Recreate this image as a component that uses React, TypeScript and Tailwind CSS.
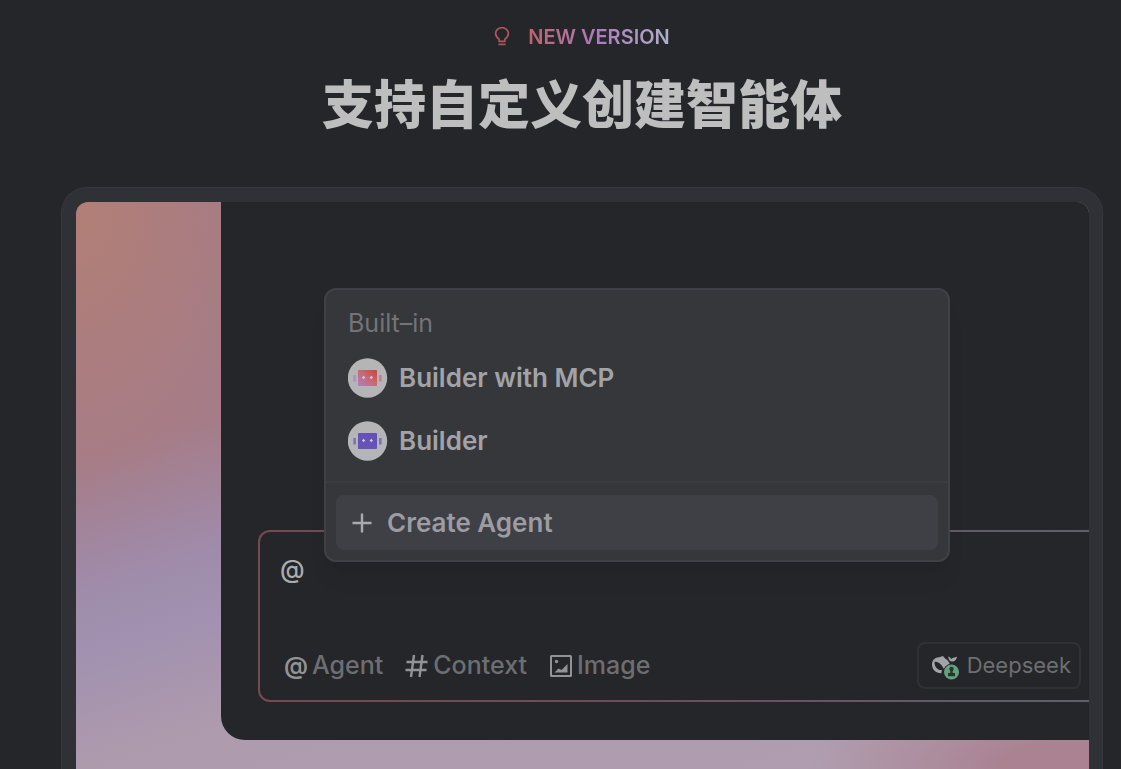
import { useState } from "react";

interface BotIconProps {
  id: string;
  from: string;
  to: string;
  ear: string;
}

const BotIcon = ({ id, from, to, ear }: BotIconProps) => {
  return (
    <svg className="size-10 shrink-0" viewBox="0 0 40 40" aria-hidden="true">
      <defs>
        <linearGradient id={id} x1="0" y1="1" x2="1" y2="0">
          <stop offset="0" stopColor={from} />
          <stop offset="0.5" stopColor={ear} />
          <stop offset="1" stopColor={to} />
        </linearGradient>
      </defs>
      <circle cx="19.500" cy="20" r="19.700" fill="#b5b4b6" />
      <rect x="10" y="12" width="19" height="16" rx="1" fill={`url(#${id})`} />
      <rect x="5.300" y="17" width="2.600" height="6.500" fill={from} opacity="0.7" />
      <rect x="31" y="17" width="2.600" height="6.500" fill={ear} opacity="0.7" />
      <path d="M15.600 17.800l1.700 1.700-1.700 1.700-1.700-1.700zM23.300 17.800l1.700 1.700-1.700 1.700-1.700-1.700z" fill="#d3c5d8" />
    </svg>
  );
};

const BulbIcon = () => {
  return (
    <svg className="h-5 w-4" viewBox="0 0 16 20" fill="none" stroke="#b0565a" strokeWidth="1.700" aria-hidden="true">
      <path d="M5.200 14.300v-2C2.800 10.400 1.600 8.700 1.600 6.500a6.400 5.800 0 0 1 12.800 0c0 2.200-1.200 3.900-3.600 5.800v2z" />
      <path d="M4.500 17.400h7" />
    </svg>
  );
};

const HashIcon = () => {
  return (
    <svg className="size-6" viewBox="0 0 24 24" fill="none" stroke="#929396" strokeWidth="2.400" aria-hidden="true">
      <path d="M1.500 8h21M.5 16h21M9 1L6 23M17.500 1l-3 22" />
    </svg>
  );
};

const ImageIcon = () => {
  return (
    <svg className="size-6" viewBox="0 0 24 24" fill="none" aria-hidden="true">
      <rect x="2" y="2" width="20" height="20" rx="0.500" stroke="#929396" strokeWidth="2" />
      <circle cx="7.500" cy="7.500" r="1.700" fill="#929396" />
      <path d="M5.500 18.500l4-4 3 1.500 6-6v8.500z" fill="#929396" />
    </svg>
  );
};

const DeepseekIcon = () => {
  return (
    <svg className="size-7" viewBox="0 0 28 28" aria-hidden="true">
      <path
        d="M1 12.500C1 8 4.300 5 8.500 5.200c1.500-.9 3-1.300 4-.9 0 1 1 1.700 2.300 2.600 2 1.400 3.400 2.900 3.900 5.100l-5.700 5-2.300-3.500C9.300 11.500 6.800 9.800 3.800 9.600c-.8 2.400.4 5.400 2.500 7.200 1.300 1.100 2.800 1.400 4.500 1.200l-.4 3.200C4.800 21.300 1 17.500 1 12.500z"
        fill="#a3a4a7"
      />
      <path
        d="M17.300 4.500c1.400.5 2.200 1.400 3 2.600 1-1.400 3-1.600 5.700-2.400-.2 2.600-2 4.700-4.600 4.900-2.600 0-4.100-2.300-4.100-5.100z"
        fill="#a3a4a7"
      />
      <circle cx="20.500" cy="20" r="8.300" fill="#25262a" />
      <circle cx="20.500" cy="20" r="7.500" fill="#64a27d" />
      <circle cx="20.500" cy="17" r="2.200" fill="#25382f" />
      <path d="M19.500 18h2l.4 3h2.100v3.300h-7V21h2.100z" fill="#25382f" />
    </svg>
  );
};

const App = () => {
  const [prompt, setPrompt] = useState("@");

  return (
    <main className="flex h-screen flex-col overflow-hidden bg-[#25262a] pt-[25px] pr-[18px] pl-[61px] font-['Inter','Noto_Sans_CJK_SC',sans-serif]">
      <div className="flex h-6 shrink-0 items-center justify-center gap-[18px]">
        <BulbIcon />
        <span className="bg-linear-to-r from-[#bd626a] via-[#ae7cbd] to-[#aeb0c8] bg-clip-text text-xl leading-6 font-semibold text-transparent">
          NEW VERSION
        </span>
      </div>
      <h1 className="mt-[21px] shrink-0 text-center text-[52px] leading-[72px] font-black text-[#bebebf]">
        支持自定义创建智能体
      </h1>

      <section className="mt-[45px] flex min-h-0 flex-1 flex-col rounded-t-[26px] border border-b-0 border-[#37383d] bg-[#303136] p-3.5 pr-[13px] pb-0">
        <div className="min-h-0 flex-1 overflow-hidden rounded-t-xl bg-[radial-gradient(ellipse_280px_100px_at_100%_100%,#aa8292_30%,#aa829200),radial-gradient(ellipse_190px_300px_at_0%_0%,#b27f76,#b27f7600),linear-gradient(162deg,#a47b86_8%,#a57c88_29%,#9f8cab_44%,#a291b0_51%,#ae9bad_64%,#b09fb1_100%)] pl-[145px]">
          <div className="rounded-bl-3xl bg-[#252629] pt-[328px] pb-[38px] pl-[37px]">
            <div className="relative rounded-l-xl bg-linear-to-r from-[#774a4d] via-[#6c4e5c] to-[#5e606d] p-0.5 pr-0">
              <div className="flex h-[168px] flex-col justify-between rounded-l-[10px] bg-[#252629] pt-5 pr-2 pb-[11px] pl-5">
                <input
                  aria-label="Prompt"
                  value={prompt}
                  onChange={(e) => {
                    setPrompt(e.target.value);
                  }}
                  className="h-9 w-full bg-transparent text-[25px] font-medium text-[#abacae] outline-none"
                />
                <div className="flex items-center justify-between">
                  <div className="flex items-center gap-[22px] pl-1 text-[25px] font-medium text-[#6d6e72]">
                    <button className="flex items-center gap-1">
                      <span className="w-6 text-2xl font-semibold text-[#929396]">@</span>
                      Agent
                    </button>
                    <button className="flex items-center gap-1">
                      <HashIcon />
                      Context
                    </button>
                    <button className="flex items-center gap-1">
                      <ImageIcon />
                      Image
                    </button>
                  </div>
                  <button className="flex h-[47px] items-center gap-2 rounded-lg border-2 border-[#303134] pr-2 pl-3 text-[22px] text-[#6d6e72]">
                    <DeepseekIcon />
                    Deepseek
                  </button>
                </div>
              </div>

              <div className="absolute bottom-[140px] left-[66px] w-[626px] rounded-xl border-2 border-[#404146] bg-[#36373a] shadow-xl shadow-black/5">
                <div className="px-[22px] pt-[17px] pb-5">
                  <p className="text-[25px] leading-8 text-[#737478]">Built–in</p>
                  <button className="mt-[19px] flex w-full items-center gap-[11px] text-[26px] leading-10 font-semibold text-[#a2a3a7]">
                    <BotIcon id="bot-mcp" from="#a982bd" to="#c44637" ear="#c76a78" />
                    Builder with MCP
                  </button>
                  <button className="mt-[23px] flex w-full items-center gap-[11px] text-[26px] leading-10 font-semibold text-[#a2a3a7]">
                    <BotIcon id="bot-builder" from="#6655b4" to="#6450b8" ear="#6553b6" />
                    Builder
                  </button>
                </div>
                <div className="border-t-2 border-[#3b3c40] px-2.5 pt-3 pb-2.5">
                  <button className="flex h-[55px] w-full items-center gap-[15px] rounded-lg bg-[#3f4045] pl-4 text-[26px] font-semibold text-[#9b9da3]">
                    <svg className="size-5" viewBox="0 0 20 20" fill="none" stroke="#a9aaad" strokeWidth="2.400" aria-hidden="true">
                      <path d="M10 .5v19M.5 10h19" />
                    </svg>
                    Create Agent
                  </button>
                </div>
              </div>
            </div>
          </div>
        </div>
      </section>
    </main>
  );
};

export default App;
